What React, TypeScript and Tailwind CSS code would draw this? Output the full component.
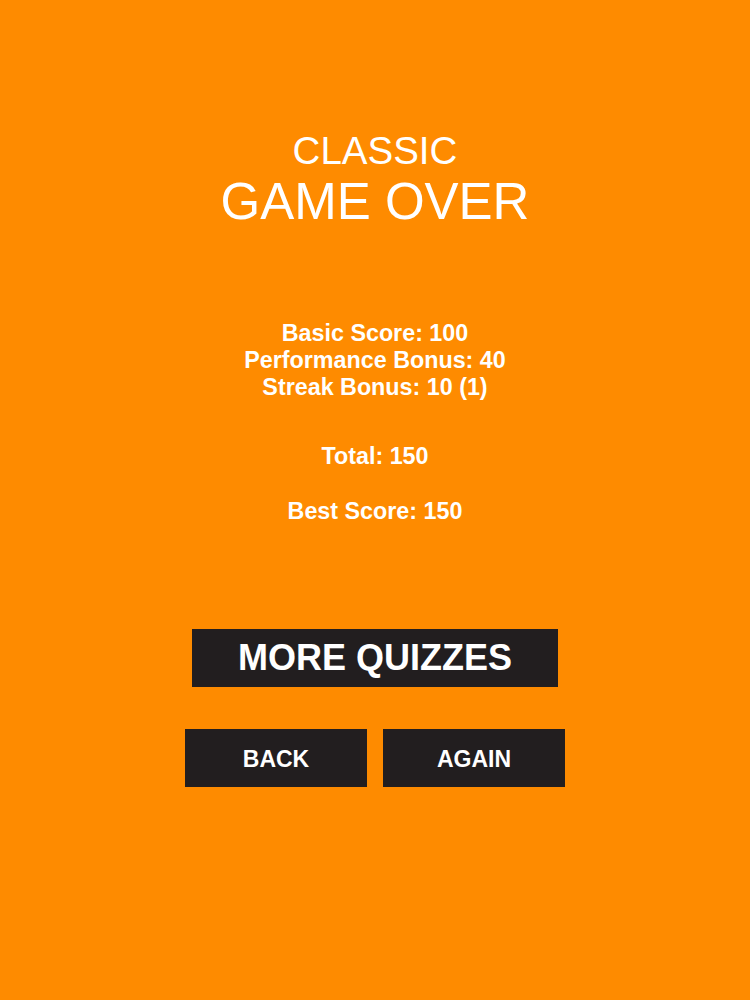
import React from "react";

export default function App() {
  const font = { fontFamily: '"Liberation Sans", Arial, Helvetica, sans-serif' };
  return (
    <div
      className="w-[750px] h-[1000px] bg-[#fe8b00] flex flex-col items-center text-white text-center"
      style={font}
    >
      <div className="mt-[132px] text-[38.5px] leading-[38px]">CLASSIC</div>
      <div className="mt-[6px] text-[51px] leading-[51px]">GAME OVER</div>

      <div className="mt-[93px] flex flex-col items-center font-bold text-[23.3px] leading-[27px]">
        <div>Basic Score: 100</div>
        <div>Performance Bonus: 40</div>
        <div>Streak Bonus: 10 (1)</div>
        <div className="mt-[42px]">Total: 150</div>
        <div className="mt-[28px]">Best Score: 150</div>
      </div>

      <button className="mt-[104px] w-[366px] h-[58px] bg-[#221e1f] text-white font-bold text-[36px] leading-none flex items-center justify-center">
        MORE QUIZZES
      </button>

      <div className="mt-[42px] flex gap-[16px]">
        <button className="w-[182px] h-[58px] pt-[2px] bg-[#221e1f] text-white font-bold text-[23px] leading-none flex items-center justify-center">
          BACK
        </button>
        <button className="w-[182px] h-[58px] pt-[2px] bg-[#221e1f] text-white font-bold text-[23px] leading-none flex items-center justify-center">
          AGAIN
        </button>
      </div>
    </div>
  );
}
